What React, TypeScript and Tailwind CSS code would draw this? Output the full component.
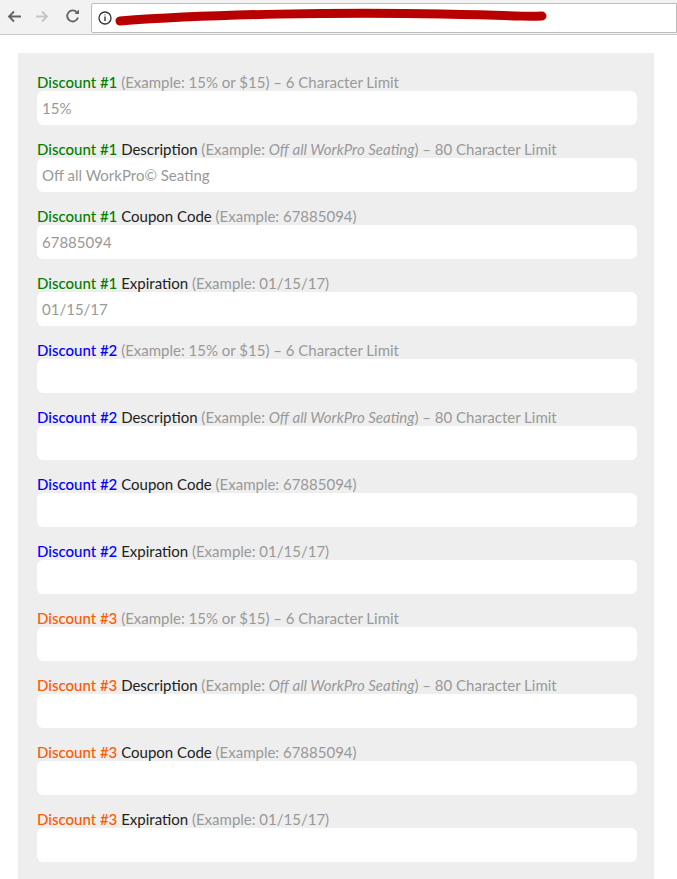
import React from "react";

const groups = [
  { n: 1, color: "text-[#008000]", vals: ["15%", "Off all WorkPro© Seating", "67885094", "01/15/17"] },
  { n: 2, color: "text-[#0000ff]", vals: ["", "", "", ""] },
  { n: 3, color: "text-[#ff5a00]", vals: ["", "", "", ""] },
];

function Field({ n, color, kind, val }: { n: number; color: string; kind: number; val: string }) {
  return (
    <div className="mb-[16px]">
      <div className="h-[17px] text-[15px] leading-[17px] whitespace-nowrap">
        <span className={color + " font-medium"}>Discount #{n}</span>
        {kind === 0 && <span className="text-[#999]"> (Example: 15% or $15) – 6 Character Limit</span>}
        {kind === 1 && (
          <>
            <span className="text-[#222]"> Description</span>
            <span className="text-[#999]"> (Example: <i>Off all WorkPro Seating</i>) – 80 Character Limit</span>
          </>
        )}
        {kind === 2 && (
          <>
            <span className="text-[#222]"> Coupon Code</span>
            <span className="text-[#999]"> (Example: 67885094)</span>
          </>
        )}
        {kind === 3 && (
          <>
            <span className="text-[#222]"> Expiration</span>
            <span className="text-[#999]"> (Example: 01/15/17)</span>
          </>
        )}
      </div>
      <div className="h-[34px] bg-white rounded-[6px] px-[5px] flex items-center text-[15px] text-[#999]">{val}</div>
    </div>
  );
}

export default function App() {
  return (
    <div className="w-[677px] h-[879px] overflow-hidden bg-white" style={{ fontFamily: "Lato, 'Open Sans', sans-serif" }}>
      <div className="h-[35px] bg-[#f2f2f2] border-b border-[#c8c8c8] flex items-center">
        <svg width="91" height="35" viewBox="0 0 91 35">
          <path d="M21 16.5H9M14 11.5L9 16.5l5 5" stroke="#5f6368" strokeWidth="1.8" fill="none" />
          <path d="M36 16.5h11M42 11.5l5 5-5 5" stroke="#c4c4c4" strokeWidth="1.8" fill="none" />
          <path d="M77 12.5a5.5 5.5 0 1 0 1 5" stroke="#5f6368" strokeWidth="1.8" fill="none" />
          <path d="M79 9.5v4.5h-4.5z" fill="#5f6368" />
        </svg>
        <div className="flex-1 h-[30px] bg-white border border-[#bdbdbd] rounded-l-[2px] mt-[1px] relative">
          <svg width="590" height="30" className="absolute left-0 top-0">
            <circle cx="13" cy="14" r="6" stroke="#333" strokeWidth="1.3" fill="none" />
            <path d="M13 12.5v4.5M13 10.5v0.8" stroke="#333" strokeWidth="1.4" />
            <path d="M28 17 C120 10, 250 8, 350 10 S430 13, 450 12" stroke="#b80000" strokeWidth="9" strokeLinecap="round" fill="none" />
          </svg>
        </div>
      </div>
      <div className="mx-[18px] mt-[18px] bg-[#eeeeee] w-[636px] h-[900px] pl-[19px] pr-[17px] pt-[21px]">
        {groups.map((g) =>
          [0, 1, 2, 3].map((k) => <Field key={`${g.n}-${k}`} n={g.n} color={g.color} kind={k} val={g.vals[k]} />)
        )}
      </div>
    </div>
  );
}
